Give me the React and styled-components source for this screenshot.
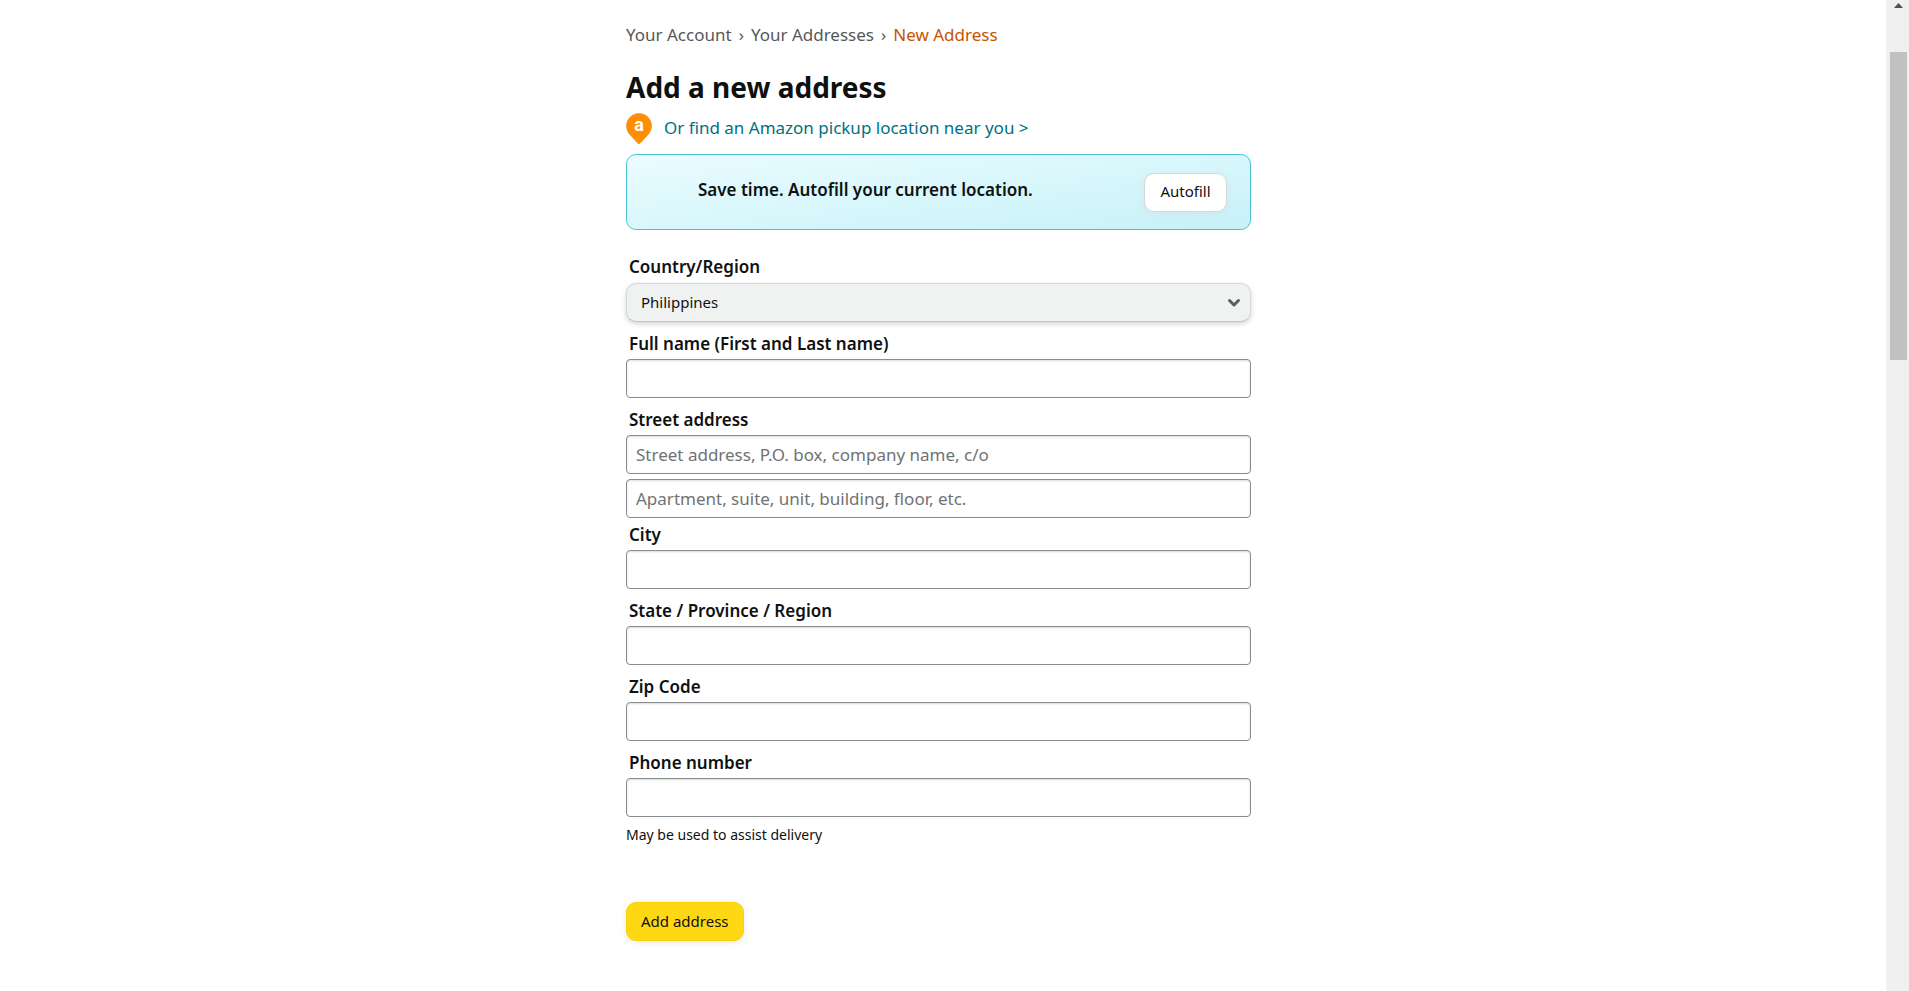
import React from 'react';
import styled, { createGlobalStyle } from 'styled-components';

const GlobalStyle = createGlobalStyle`
  *, *::before, *::after { box-sizing: border-box; }
  html { height: 100%; }
  body {
    margin: 0;
    min-height: 100%;
    background: #fff;
    color: #0f1111;
    font-family: "Noto Sans", "Open Sans", sans-serif;
    font-size: 17px;
    line-height: 25px;
  }
`;

const Shell = styled.div`
  display: flex;
  min-height: 100vh;
`;

const Content = styled.main`
  flex: 1;
  display: flex;
  justify-content: center;
  padding: 22px 9px 48px 0;
`;

const Column = styled.div`
  width: 100%;
  max-width: 625px;
`;

const Breadcrumb = styled.nav`
  display: flex;
  gap: 7px;
  color: #565959;
`;

const Crumb = styled.a`
  color: ${({ $current }) => ($current ? '#c45500' : '#565959')};
  text-decoration: none;
`;

const Title = styled.h1`
  margin: 21px 0 7px;
  font-size: 28px;
  line-height: 38px;
  font-weight: 700;
`;

const Pickup = styled.div`
  display: flex;
  gap: 12px;
`;

const PinIcon = styled.svg`
  flex: none;
  width: 26px;
  height: 31px;
`;

const PinLetter = styled.text`
  fill: #fff;
  font-family: Roboto, sans-serif;
  font-size: 18px;
  font-weight: 700;
  text-anchor: middle;
`;

const PickupLink = styled.a`
  padding-top: 2px;
  color: #007185;
  text-decoration: none;
`;

const Banner = styled.section`
  display: flex;
  justify-content: space-between;
  align-items: center;
  height: 76px;
  margin: 10px 0 25px;
  padding: 0 23px 0 71px;
  border: 1px solid #4dbfd9;
  border-radius: 10px;
  background: linear-gradient(173deg, #ebfcff 0%, #c6f2f8 100%);
`;

const BannerText = styled.p`
  margin: 0 0 6px;
  font-weight: 600;
`;

const Button = styled.button`
  min-width: 83px;
  height: 39px;
  padding: 0 14px 2px;
  border: 1px solid ${({ $primary }) => ($primary ? '#fcd200' : '#d5d9d9')};
  border-radius: 10px;
  background: ${({ $primary }) => ($primary ? '#ffd814' : '#fff')};
  box-shadow: 0 2px 6px rgba(213, 217, 217, 0.5);
  color: #0f1111;
  font-family: inherit;
  font-size: 15px;
  line-height: 24px;
  cursor: pointer;
`;

const Form = styled.form`
  display: flex;
  flex-direction: column;
  align-items: flex-start;
`;

const Field = styled.div`
  display: flex;
  flex-direction: column;
  width: 100%;
  margin-bottom: ${({ $tight }) => ($tight ? '5px' : '10px')};
`;

const Label = styled.label`
  margin-bottom: 4px;
  padding: 0 3px;
  font-weight: 600;
  line-height: 23px;
`;

const Input = styled.input`
  width: 100%;
  height: 39px;
  padding: 0 9px;
  border: 1px solid #888c8c;
  border-radius: 4px;
  background: #fff;
  box-shadow: 0 1px 2px rgba(15, 17, 17, 0.15) inset;
  color: #0f1111;
  font-family: inherit;
  font-size: 17px;

  & + & { margin-top: 5px; }

  &::placeholder { color: #6f7373; opacity: 1; }
`;

const SelectBox = styled.div`
  display: grid;
  align-items: center;
  margin-top: 1px;

  & > * { grid-area: 1 / 1; }
`;

const Select = styled.select`
  appearance: none;
  width: 100%;
  height: 39px;
  padding: 0 40px 2px 14px;
  border: 1px solid #d5d9d9;
  border-bottom-color: #c0c4c4;
  border-radius: 10px;
  background: #f0f2f2;
  box-shadow: 0 2px 5px rgba(15, 17, 17, 0.18);
  color: #0f1111;
  font-family: inherit;
  font-size: 15px;
`;

const Chevron = styled.svg`
  justify-self: end;
  width: 14px;
  height: 10px;
  margin-right: 10px;
  pointer-events: none;
`;

const Hint = styled.p`
  margin: 0 0 55px;
  padding-top: 1px;
  font-size: 14px;
  line-height: 24px;
`;

const Submit = styled.div`
  display: flex;
`;

const ScrollTrack = styled.aside`
  display: flex;
  flex-direction: column;
  align-items: flex-end;
  width: 23px;
  padding-right: 2px;
  background: #f0f0f0;
  border-left: 1px solid #f6f6f6;
`;

const ScrollArrow = styled.svg`
  width: 9px;
  height: 5px;
  margin: 3px 4px 44px;
`;

const ScrollThumb = styled.div`
  width: 17px;
  height: 308px;
  background: #c1c1c1;
`;

const FIELDS = [
  { id: 'name', label: 'Full name (First and Last name)', placeholders: [''] },
  {
    id: 'street',
    label: 'Street address',
    placeholders: ['Street address, P.O. box, company name, c/o', 'Apartment, suite, unit, building, floor, etc.'],
    tight: true,
  },
  { id: 'city', label: 'City', placeholders: [''] },
  { id: 'state', label: 'State / Province / Region', placeholders: [''] },
  { id: 'zip', label: 'Zip Code', placeholders: [''] },
  { id: 'phone', label: 'Phone number', placeholders: [''], tight: true },
];

function TextField({ id, label, placeholders, tight }) {
  return (
    <Field $tight={tight}>
      <Label htmlFor={id}>{label}</Label>
      {placeholders.map((text, i) => (
        <Input key={i} id={i ? `${id}-${i + 1}` : id} type="text" placeholder={text} aria-label={i ? text : undefined} />
      ))}
    </Field>
  );
}

export default function App() {
  return (
    <>
      <GlobalStyle />
      <Shell>
        <Content>
          <Column>
            <Breadcrumb aria-label="Breadcrumb">
              <Crumb href="#account">Your Account</Crumb>
              <span>›</span>
              <Crumb href="#addresses">Your Addresses</Crumb>
              <span>›</span>
              <Crumb href="#new" $current>New Address</Crumb>
            </Breadcrumb>
            <Title>Add a new address</Title>
            <Pickup>
              <PinIcon viewBox="0 0 26 31" aria-hidden="true">
                <path d="M13 0.5C6 0.5 0.5 6 0.5 13c0 4 1.8 7 4.5 9.8l6.6 7.2a1.9 1.9 0 0 0 2.8 0l6.6-7.2c2.7-2.8 4.5-5.8 4.5-9.8C25.500 6 20 0.5 13 0.5z" fill="#ff8f00" stroke="#e88a2c" strokeWidth="0.6" />
                <PinLetter x="13" y="18">a</PinLetter>
              </PinIcon>
              <PickupLink href="#pickup">Or find an Amazon pickup location near you &gt;</PickupLink>
            </Pickup>
            <Banner>
              <BannerText>Save time. Autofill your current location.</BannerText>
              <Button type="button">Autofill</Button>
            </Banner>
            <Form onSubmit={(e) => e.preventDefault()}>
              <Field>
                <Label htmlFor="country">Country/Region</Label>
                <SelectBox>
                  <Select id="country" defaultValue="Philippines">
                    <option>Philippines</option>
                  </Select>
                  <Chevron viewBox="0 0 14 10" aria-hidden="true">
                    <path d="M2.500 2.500L7 7L11.500 2.500" fill="none" stroke="#5a5e5e" strokeWidth="3" strokeLinecap="round" strokeLinejoin="round" />
                  </Chevron>
                </SelectBox>
              </Field>
              {FIELDS.map((field) => (
                <TextField key={field.id} {...field} />
              ))}
              <Hint>May be used to assist delivery</Hint>
              <Submit>
                <Button type="submit" $primary>Add address</Button>
              </Submit>
            </Form>
          </Column>
        </Content>
        <ScrollTrack aria-hidden="true">
          <ScrollArrow viewBox="0 0 9 5">
            <path d="M0 5L4.500 0L9 5z" fill="#505050" />
          </ScrollArrow>
          <ScrollThumb />
        </ScrollTrack>
      </Shell>
    </>
  );
}
